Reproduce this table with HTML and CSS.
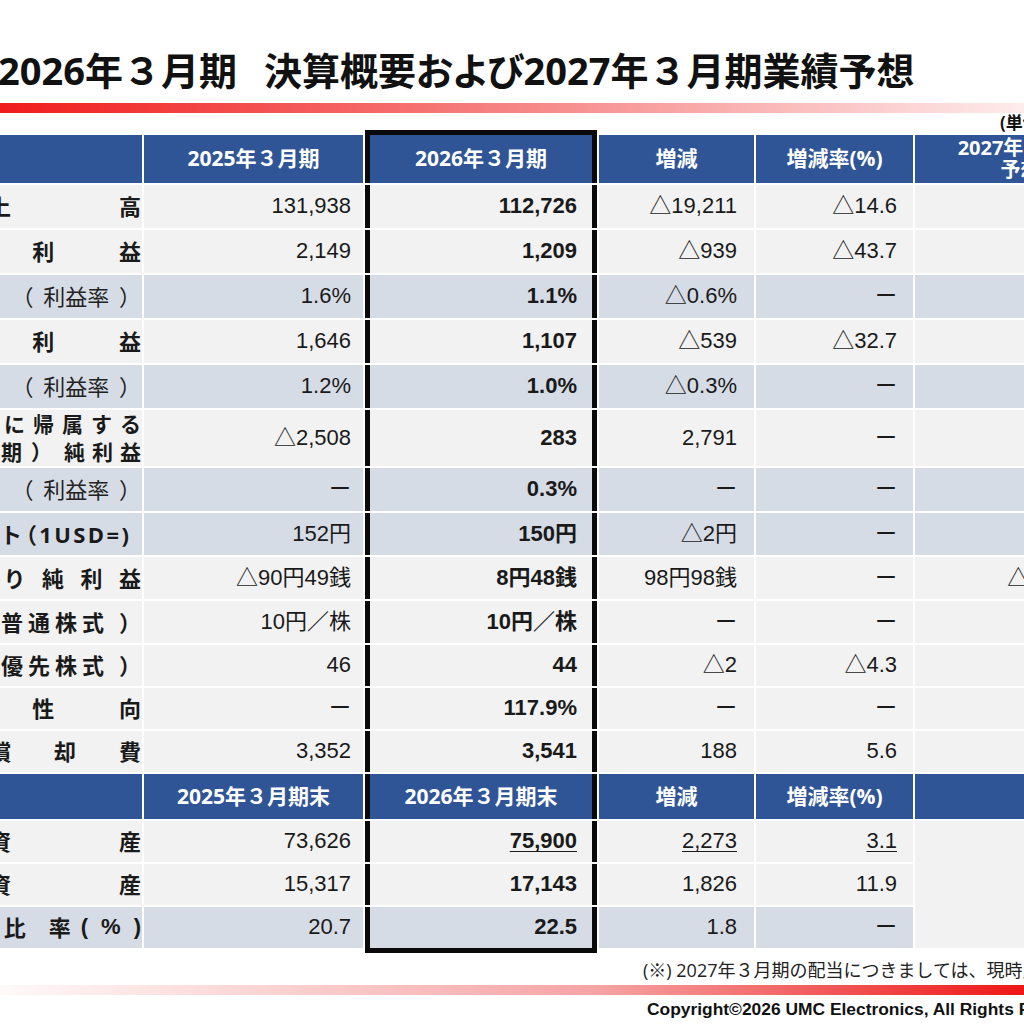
FILE: index.html
```html
<!DOCTYPE html>
<html lang="ja">
<head>
<meta charset="utf-8">
<title>2026年３月期 決算概要および2027年３月期業績予想</title>
<link rel="stylesheet" href="styles.css">
</head>
<body>
<div class="slide">
  <h1 class="title">2026年３月期<span class="gap"></span>決算概要<span class="kana">および</span>2027年３月期業績予想</h1>
  <div class="bar bar-top"></div>
  <div class="unit">(単位：百万円)</div>
  <table class="summary">
    <colgroup>
      <col class="c-label"><col class="c-prev"><col class="c-cur"><col class="c-diff"><col class="c-rate"><col class="c-fc">
    </colgroup>
    <tbody>
      <tr class="head h48">
        <td class="label"></td>
        <td>2025年３月期</td>
        <td class="cur cur-top">2026年３月期</td>
        <td>増減</td>
        <td>増減率(%)</td>
        <td class="fc-head">2027年３月期<br>予想</td>
      </tr>
      <tr class="lt h43">
        <td class="label"><span class="dist">売上高</span></td>
        <td class="num p1">131,938</td>
        <td class="num cur">112,726</td>
        <td class="num p3">△19,211</td>
        <td class="num p4">△14.6</td>
        <td class="num p5"></td>
      </tr>
      <tr class="lt h43">
        <td class="label"><span class="dist">営業利益</span></td>
        <td class="num p1">2,149</td>
        <td class="num cur">1,209</td>
        <td class="num p3">△939</td>
        <td class="num p4">△43.7</td>
        <td class="num p5"></td>
      </tr>
      <tr class="sh h43">
        <td class="label rate">（ 利益率 ）</td>
        <td class="num p1">1.6%</td>
        <td class="num cur">1.1%</td>
        <td class="num p3">△0.6%</td>
        <td class="num p4">ー</td>
        <td class="num p5"></td>
      </tr>
      <tr class="lt h43">
        <td class="label"><span class="dist">経常利益</span></td>
        <td class="num p1">1,646</td>
        <td class="num cur">1,107</td>
        <td class="num p3">△539</td>
        <td class="num p4">△32.7</td>
        <td class="num p5"></td>
      </tr>
      <tr class="sh h43">
        <td class="label rate">（ 利益率 ）</td>
        <td class="num p1">1.2%</td>
        <td class="num cur">1.0%</td>
        <td class="num p3">△0.3%</td>
        <td class="num p4">ー</td>
        <td class="num p5"></td>
      </tr>
      <tr class="lt h54">
        <td class="label two">
          <span class="dist">親会社株主に帰属する</span>
          <span class="lab"><span class="ls9">（当期）</span><span class="ls7">純利益</span></span>
        </td>
        <td class="num p1">△2,508</td>
        <td class="num cur">283</td>
        <td class="num p3">2,791</td>
        <td class="num p4">ー</td>
        <td class="num p5"></td>
      </tr>
      <tr class="sh h43">
        <td class="label rate">（ 利益率 ）</td>
        <td class="num p1">ー</td>
        <td class="num cur">0.3%</td>
        <td class="num p3">ー</td>
        <td class="num p4">ー</td>
        <td class="num p5"></td>
      </tr>
      <tr class="sh h42">
        <td class="label fx"><span class="lab"><span class="fx-name">為替レート</span><span class="usd">（1USD=)</span></span></td>
        <td class="num p1">152円</td>
        <td class="num cur">150円</td>
        <td class="num p3">△2円</td>
        <td class="num p4">ー</td>
        <td class="num p5"></td>
      </tr>
      <tr class="lt h42">
        <td class="label"><span class="dist">1株当たり純利益</span></td>
        <td class="num p1">△90円49銭</td>
        <td class="num cur">8円48銭</td>
        <td class="num p3">98円98銭</td>
        <td class="num p4">ー</td>
        <td class="num p5">△9円17銭</td>
      </tr>
      <tr class="lt h42">
        <td class="label"><span class="lab"><span class="ls5">年間配当金（普通株式</span><span class="close">）</span></span></td>
        <td class="num p1">10円／株</td>
        <td class="num cur">10円／株</td>
        <td class="num p3">ー</td>
        <td class="num p4">ー</td>
        <td class="num p5"></td>
      </tr>
      <tr class="lt h41">
        <td class="label"><span class="lab"><span class="ls5">年間配当金（優先株式</span><span class="close">）</span></span></td>
        <td class="num p1">46</td>
        <td class="num cur">44</td>
        <td class="num p3">△2</td>
        <td class="num p4">△4.3</td>
        <td class="num p5"></td>
      </tr>
      <tr class="lt h41">
        <td class="label"><span class="dist">配当性向</span></td>
        <td class="num p1">ー</td>
        <td class="num cur">117.9%</td>
        <td class="num p3">ー</td>
        <td class="num p4">ー</td>
        <td class="num p5"></td>
      </tr>
      <tr class="lt h41">
        <td class="label"><span class="dist">減価償却費</span></td>
        <td class="num p1">3,352</td>
        <td class="num cur">3,541</td>
        <td class="num p3">188</td>
        <td class="num p4">5.6</td>
        <td class="num p5"></td>
      </tr>
      <tr class="head h45">
        <td class="label"></td>
        <td>2025年３月期末</td>
        <td class="cur">2026年３月期末</td>
        <td>増減</td>
        <td>増減率(%)</td>
        <td></td>
      </tr>
      <tr class="lt h41">
        <td class="label"><span class="dist">総資産</span></td>
        <td class="num p1">73,626</td>
        <td class="num cur"><u>75,900</u></td>
        <td class="num p3"><u>2,273</u></td>
        <td class="num p4"><u>3.1</u></td>
        <td class="num p5 merged" rowspan="3"></td>
      </tr>
      <tr class="lt h41">
        <td class="label"><span class="dist">純資産</span></td>
        <td class="num p1">15,317</td>
        <td class="num cur">17,143</td>
        <td class="num p3">1,826</td>
        <td class="num p4">11.9</td>
      </tr>
      <tr class="sh h41">
        <td class="label"><span class="lab"><span class="ls23">自己資本比率</span><span class="pct">(%)</span></span></td>
        <td class="num p1">20.7</td>
        <td class="num cur cur-bottom">22.5</td>
        <td class="num p3">1.8</td>
        <td class="num p4">ー</td>
      </tr>
    </tbody>
  </table>
  <p class="note">(※) 2027年３月期の配当につきましては、現時点では未定であります。</p>
  <div class="bar bar-bottom"></div>
  <p class="copyright">Copyright©2026 UMC Electronics, All Rights Reserved.</p>
</div>
</body>
</html>
```
FILE: styles.css
```css
html, body {
  margin: 0;
  padding: 0;
  background: #ffffff;
  width: 1024px;
  height: 1024px;
  overflow: hidden;
}

.slide {
  width: 1300px;
  margin-left: -160px;
  font-family: "Open Sans", "Noto Sans CJK JP", sans-serif;
  color: #1a1a1a;
}

.title {
  box-sizing: border-box;
  height: 103px;
  margin: 0;
  padding: 47px 0 0 158px;
  font-size: 38px;
  line-height: 46px;
  font-weight: 700;
  color: #111111;
  white-space: nowrap;
}

.title .gap {
  display: inline-block;
  width: 27px;
}

.title .kana {
  font-feature-settings: "palt";
}

.bar {
  height: 10px;
}

.bar-top {
  background: linear-gradient(90deg, #ee1515 0px, #f01c1c 160px, #ffffff 1280px);
}

.bar-bottom {
  background: linear-gradient(90deg, #ffffff 120px, #f6a3a3 760px, #ee1515 1190px);
}

.unit {
  height: 20px;
  padding-left: 1160px;
  font-size: 17px;
  line-height: 20px;
  font-weight: 700;
  white-space: nowrap;
  color: #111111;
}

.summary {
  table-layout: fixed;
  width: 1278px;
  margin-left: 10px;
  border-collapse: separate;
  border-spacing: 2px;
  background: #ffffff;
}

.c-label { width: 290px; }
.c-prev { width: 219px; }
.c-cur { width: 232px; }
.c-diff { width: 155px; }
.c-rate { width: 157px; }
.c-fc { width: 211px; }

.summary td {
  padding: 0;
  vertical-align: middle;
  white-space: nowrap;
  line-height: 1.2;
}

.h48 td { height: 48px; }
.h45 td { height: 45px; }
.h54 td { height: 54px; }
.h43 td { height: 43px; }
.h42 td { height: 42px; }
.h41 td { height: 41px; }

.lt td { background: #f2f2f2; }
.sh td { background: #d6dce5; }
.merged { background: #f2f2f2; }

.head td {
  background: #2f5597;
  color: #ffffff;
  font-size: 21px;
  font-weight: 700;
  text-align: center;
}

.head .fc-head {
  font-size: 20px;
  line-height: 22px;
}

.cur {
  border-left: 5px solid #0a0a0a;
  border-right: 5px solid #0a0a0a;
}

.cur-top {
  box-shadow: 0 -5px 0 #0a0a0a;
}

.cur-bottom {
  box-shadow: 0 5px 0 #0a0a0a;
}

.label {
  padding-right: 1px !important;
  text-align: right;
  font-family: "Open Sans", "Noto Sans CJK JP", sans-serif;
  font-size: 22px;
  font-weight: 700;
  color: #1a1a1a;
}

.label .dist {
  display: block;
  width: 282px;
  margin-left: auto;
  text-align: justify;
  text-align-last: justify;
}

.label .lab {
  display: flex;
  justify-content: flex-end;
  white-space: nowrap;
}

.label.rate {
  font-weight: 400;
  font-size: 22px;
  word-spacing: 4px;
  color: #222222;
}

.label.two {
  font-size: 21px;
  line-height: 28px;
}

.ls9 {
  letter-spacing: 9px;
  margin-right: 3px;
}

.ls7 {
  letter-spacing: 7px;
  margin-right: -7px;
}

.ls5 {
  letter-spacing: 5px;
}

.close {
  margin-left: 10px;
}

.label.fx {
  padding-right: 13px !important;
}

.fx-name {
  margin-right: -7px;
}

.usd {
  letter-spacing: 2.4px;
  margin-right: -2.4px;
}

.ls23 {
  letter-spacing: 23px;
  margin-right: -13px;
}

.pct {
  font-family: "Liberation Sans", sans-serif;
  letter-spacing: 13px;
  margin-right: -13px;
}

.num {
  font-family: "Liberation Sans", "Noto Sans CJK JP", sans-serif;
  font-size: 22px;
  text-align: right;
  color: #1a1a1a;
}

.num.cur {
  font-weight: 700;
  padding-right: 15px;
}

.num u {
  text-underline-offset: 3px;
  text-decoration-thickness: 1px;
}

.p1 { padding-right: 12px !important; }
.p3 { padding-right: 17px !important; }
.p4 { padding-right: 16px !important; }
.p5 { padding-right: 16px !important; }

.note {
  margin: 7px 0 0 0;
  padding-left: 803px;
  height: 28px;
  font-size: 18px;
  line-height: 26px;
  color: #222222;
  white-space: nowrap;
}

.copyright {
  margin: 2px 0 0 0;
  padding-left: 807px;
  font-family: "Liberation Sans Narrow", "Arial Narrow", "Liberation Sans", sans-serif;
  font-size: 17.4px;
  line-height: 24px;
  font-weight: 700;
  color: #111111;
  white-space: nowrap;
}
```
